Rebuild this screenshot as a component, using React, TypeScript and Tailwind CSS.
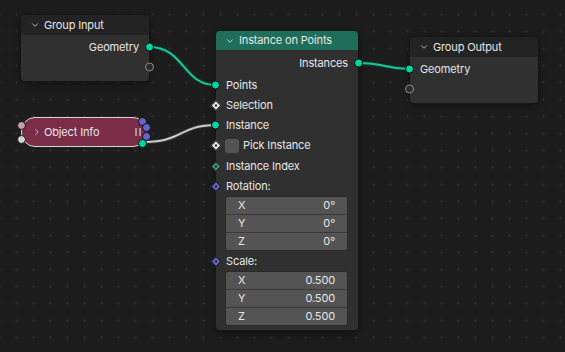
import { ChevronDown, ChevronRight } from "lucide-react";

type Kind = "geo" | "empty" | "bool" | "int" | "vec";

function Socket({ kind, side }: { kind: Kind; side: "l" | "r" }) {
  const pos = side === "l" ? "-left-[5px]" : "-right-[5px]";
  if (kind === "geo")
    return <span className={`absolute ${pos} top-1/2 -translate-y-1/2 w-[9px] h-[9px] rounded-full bg-[#00d6a3] border border-[#0f0f0f]`} />;
  if (kind === "empty")
    return <span className={`absolute ${pos} top-1/2 -translate-y-1/2 w-[9px] h-[9px] rounded-full border border-[#8c8c8c] bg-[#2b2b2b]`} />;
  const fill = kind === "bool" ? "bg-[#e8e8e8]" : kind === "int" ? "bg-[#4f8a78]" : "bg-[#6565c8]";
  return (
    <span className={`absolute ${pos} top-1/2 -translate-y-1/2 w-[9px] h-[9px] flex items-center justify-center`}>
      <span className={`w-[8px] h-[8px] shrink-0 rotate-45 ${fill} border border-[#111] flex items-center justify-center`}>
        <span className="w-[2px] h-[2px] bg-[#222]" />
      </span>
    </span>
  );
}

function Row({ label, kind, side = "l", right = false }: { label?: string; kind?: Kind; side?: "l" | "r"; right?: boolean }) {
  return (
    <div className={`relative h-[20px] flex items-center px-[10px] ${right ? "justify-end" : ""}`}>
      {kind && <Socket kind={kind} side={side} />}
      {label && <span>{label}</span>}
    </div>
  );
}

function ValueBox({ rows }: { rows: [string, string][] }) {
  return (
    <div className="ml-[9px] w-[123px] rounded-[3px] overflow-hidden bg-[#3a3a3a] flex flex-col gap-px border border-[#2a2a2a]">
      {rows.map(([k, v]) => (
        <div key={k} className="h-[17px] bg-[#545454] flex items-center justify-between pl-[12px] pr-[12px]">
          <span>{k}</span>
          <span>{v}</span>
        </div>
      ))}
    </div>
  );
}

function GroupNode({ title, x, y, children }: { title: string; x: number; y: number; children: React.ReactNode }) {
  return (
    <div
      className="absolute w-[128px] h-[66px] rounded-[4px] bg-[#303030] shadow-[0_0_0_1px_#161616,0_2px_8px_rgba(0,0,0,0.55)] flex flex-col"
      style={{ left: x, top: y }}
    >
      <div className="h-[20px] bg-[#232323] rounded-t-[4px] flex items-center gap-[4px] pl-[9px] shrink-0">
        <ChevronDown size={10} strokeWidth={2} className="text-[#cfcfcf]" />
        <span>{title}</span>
      </div>
      {children}
    </div>
  );
}

export default function App() {
  return (
    <div className="relative w-[565px] h-[352px] overflow-hidden bg-[#1d1d1d] bg-[radial-gradient(circle,#2d2d2d_1px,transparent_1.3px)] bg-size-[17px_17px] bg-position-[8px_6px] text-[#e6e6e6] text-[11px] font-['Inter','DejaVu_Sans',sans-serif] tracking-[-0.15px]">
      {/* links */}
      <svg className="absolute inset-0" width={565} height={352}>
        <path d="M149 47 C185 47 182 85 216 85" fill="none" stroke="#0c3a2f" strokeWidth={4} />
        <path d="M149 47 C185 47 182 85 216 85" fill="none" stroke="#1fc59b" strokeWidth={2} />
        <path d="M358 63 C386 63 384 69 410 69" fill="none" stroke="#0c3a2f" strokeWidth={4} />
        <path d="M358 63 C386 63 384 69 410 69" fill="none" stroke="#1fc59b" strokeWidth={2} />
        <path d="M145 142 C182 142 180 125 216 125" fill="none" stroke="#333" strokeWidth={4} />
        <path d="M145 142 C182 142 180 125 216 125" fill="none" stroke="#cdcdcd" strokeWidth={2} />
      </svg>

      <GroupNode title="Group Input" x={21} y={15}>
        <div className="pt-[2px]">
          <Row label="Geometry" kind="geo" side="r" right />
          <Row kind="empty" side="r" />
        </div>
      </GroupNode>

      <GroupNode title="Group Output" x={410} y={37}>
        <div className="pt-[2px]">
          <Row label="Geometry" kind="geo" />
          <Row kind="empty" />
        </div>
      </GroupNode>

      {/* Instance on Points */}
      <div className="absolute left-[216px] top-[31px] w-[142px] h-[299px] rounded-[4px] bg-[#303030] shadow-[0_0_0_1px_#161616,0_2px_8px_rgba(0,0,0,0.55)] flex flex-col">
        <div className="h-[19px] bg-[#1f6e5a] rounded-t-[4px] flex items-center gap-[4px] pl-[9px] shrink-0">
          <ChevronDown size={10} strokeWidth={2} className="text-[#d6e8e2]" />
          <span>Instance on Points</span>
        </div>
        <div className="pt-[3px]">
          <Row label="Instances" kind="geo" side="r" right />
        </div>
        <div className="pt-[2px] flex flex-col">
          <Row label="Points" kind="geo" />
          <Row label="Selection" kind="bool" />
          <Row label="Instance" kind="geo" />
          <div className="relative h-[21px] flex items-center pl-[9px] gap-[4px]">
            <Socket kind="bool" side="l" />
            <span className="w-[14px] h-[14px] rounded-[3px] bg-[#545454]" />
            <span>Pick Instance</span>
          </div>
          <Row label="Instance Index" kind="int" />
          <Row label="Rotation:" kind="vec" />
          <ValueBox rows={[["X", "0°"], ["Y", "0°"], ["Z", "0°"]]} />
          <Row label="Scale:" kind="vec" />
          <ValueBox rows={[["X", "0.500"], ["Y", "0.500"], ["Z", "0.500"]]} />
        </div>
      </div>

      {/* Object Info (collapsed) */}
      <div className="absolute left-[21px] top-[117px] w-[126px] h-[30px] rounded-[14px] bg-[#7b2c47] border border-[#d8d8d8] flex items-center pl-[10px] gap-[2px]">
        <ChevronRight size={10} strokeWidth={2} className="text-[#e6d6dc]" />
        <span>Object Info</span>
        <span className="absolute right-[5px] top-[10px] flex gap-[2px]">
          <span className="w-[2px] h-[8px] bg-[#b58a99]" />
          <span className="w-[2px] h-[8px] bg-[#b58a99]" />
        </span>
        <span className="absolute -left-[5px] top-[3px] w-[9px] h-[9px] rounded-full bg-[#c79ea6] border border-[#111]" />
        <span className="absolute -left-[5px] top-[17px] w-[9px] h-[9px] rounded-full bg-[#d4d4d4] border border-[#111]" />
        <span className="absolute right-[-1px] top-[-1px] w-[9px] h-[9px] rounded-full bg-[#6565c8] border border-[#111]" />
        <span className="absolute right-[-5px] top-[5px] w-[9px] h-[9px] rounded-full bg-[#6565c8] border border-[#111]" />
        <span className="absolute right-[-5px] top-[14px] w-[9px] h-[9px] rounded-full bg-[#6565c8] border border-[#111]" />
        <span className="absolute right-[-1px] top-[21px] w-[9px] h-[9px] rounded-full bg-[#00d6a3] border border-[#111]" />
      </div>
    </div>
  );
}
